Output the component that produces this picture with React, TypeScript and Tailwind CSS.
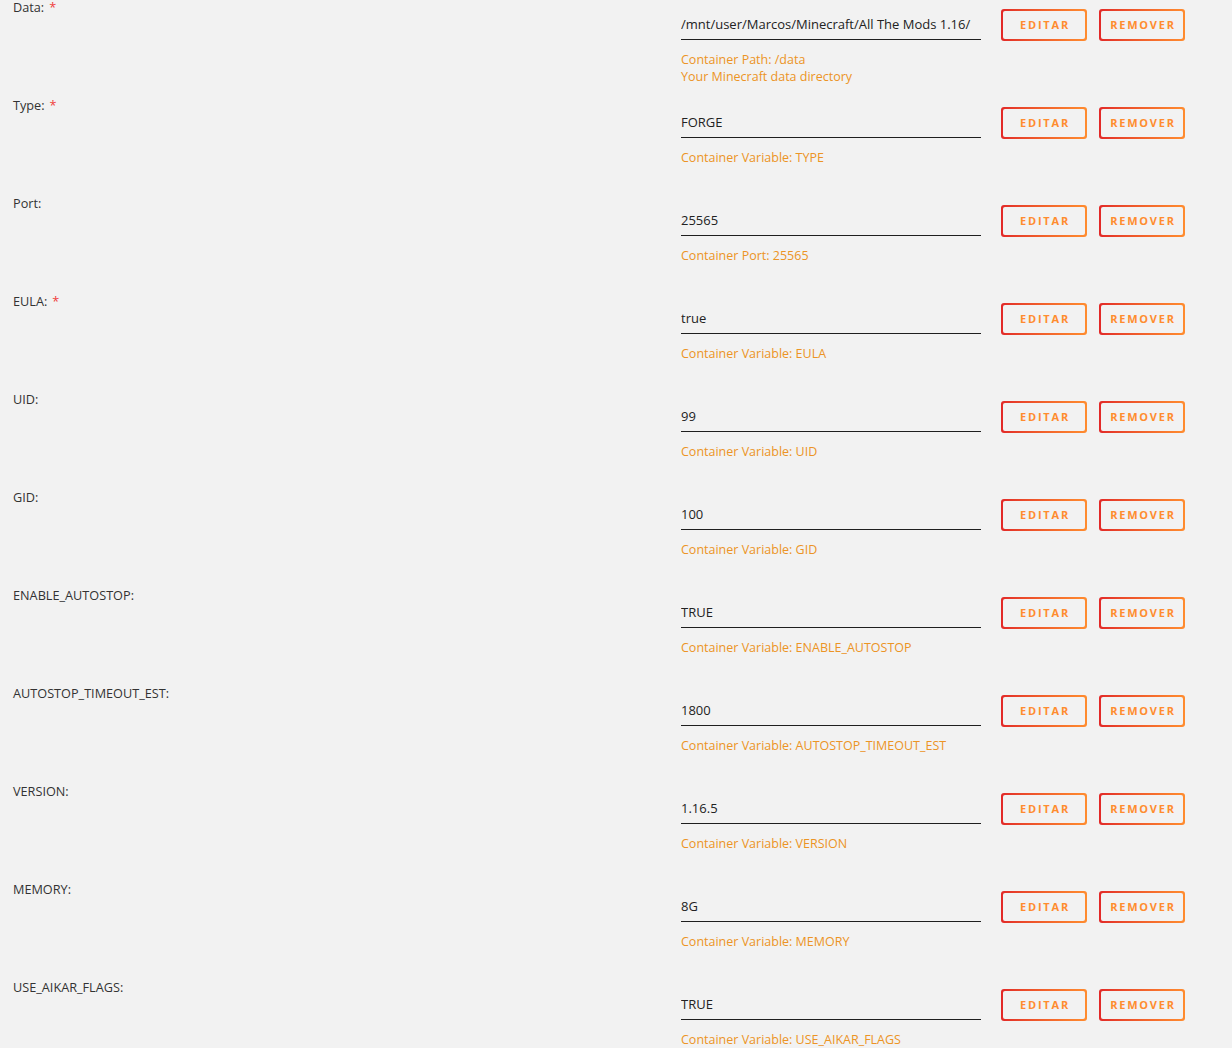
const rows: { label: string; required?: boolean; value: string; help: string[] }[] = [
  { label: 'Data:', required: true, value: '/mnt/user/Marcos/Minecraft/All The Mods 1.16/', help: ['Container Path: /data', 'Your Minecraft data directory'] },
  { label: 'Type:', required: true, value: 'FORGE', help: ['Container Variable: TYPE'] },
  { label: 'Port:', value: '25565', help: ['Container Port: 25565'] },
  { label: 'EULA:', required: true, value: 'true', help: ['Container Variable: EULA'] },
  { label: 'UID:', value: '99', help: ['Container Variable: UID'] },
  { label: 'GID:', value: '100', help: ['Container Variable: GID'] },
  { label: 'ENABLE_AUTOSTOP:', value: 'TRUE', help: ['Container Variable: ENABLE_AUTOSTOP'] },
  { label: 'AUTOSTOP_TIMEOUT_EST:', value: '1800', help: ['Container Variable: AUTOSTOP_TIMEOUT_EST'] },
  { label: 'VERSION:', value: '1.16.5', help: ['Container Variable: VERSION'] },
  { label: 'MEMORY:', value: '8G', help: ['Container Variable: MEMORY'] },
  { label: 'USE_AIKAR_FLAGS:', value: 'TRUE', help: ['Container Variable: USE_AIKAR_FLAGS'] },
];

const GradientButton = ({ children }: { children: string }) => (
  <div className="w-[86px] h-[32px] rounded-[3px] p-[2px] bg-gradient-to-r from-[#e22828] to-[#ff8c2f]">
    <div className="w-full h-full rounded-[2px] bg-[#f2f2f2] flex items-center justify-center text-[11px] font-bold tracking-[1.8px] text-[#ff8c2f] pl-[2px]">
      {children}
    </div>
  </div>
);

export default function App() {
  return (
    <div className="min-h-screen bg-[#f2f2f2] overflow-hidden" style={{ fontFamily: '"Open Sans", sans-serif' }}>
      {rows.map((row) => (
        <div key={row.label} className="flex h-[98px]">
          {/* label */}
          <div className="w-[681px] shrink-0 pl-[13px] text-[12.7px] leading-[15px] text-[#333]">
            {row.label}
            {row.required && <span className="text-[#f0403a] ml-[5px]">*</span>}
          </div>

          {/* setting */}
          <div className="pt-[9px]">
            <div className="flex items-start">
              <div className="w-[300px] h-[31px] border-b border-[#1f1f1f] flex items-center pt-[1px] text-[13px] text-[#222] whitespace-nowrap overflow-hidden">
                {row.value}
              </div>
              <div className="flex gap-[12px] ml-[20px]">
                <GradientButton>EDITAR</GradientButton>
                <GradientButton>REMOVER</GradientButton>
              </div>
            </div>
            <div className="mt-[10px] text-[12.5px] leading-[17px] text-[#ec9425]">
              {row.help.map((h) => (
                <div key={h}>{h}</div>
              ))}
            </div>
          </div>
        </div>
      ))}
    </div>
  );
}
